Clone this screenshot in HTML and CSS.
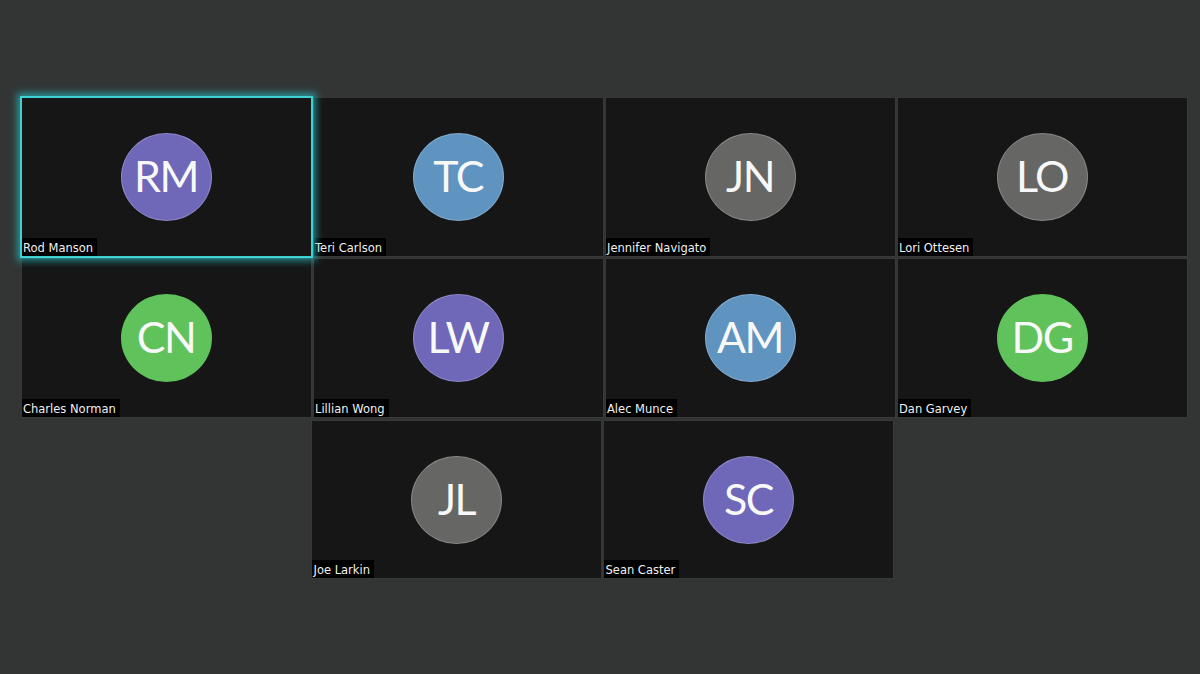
FILE: index.html
```html
<!DOCTYPE html>
<html lang="en">
<head>
<meta charset="utf-8">
<title>Gallery view</title>
<link rel="stylesheet" href="styles.css">
</head>
<body>
<main class="gallery">
  <div class="row">
    <div class="tile tile-active"><div class="avatar purple">RM</div><span class="name">Rod Manson</span></div>
    <div class="tile"><div class="avatar blue">TC</div><span class="name">Teri Carlson</span></div>
    <div class="tile"><div class="avatar gray">JN</div><span class="name">Jennifer Navigato</span></div>
    <div class="tile"><div class="avatar gray">LO</div><span class="name">Lori Ottesen</span></div>
  </div>
  <div class="row">
    <div class="tile"><div class="avatar green">CN</div><span class="name">Charles Norman</span></div>
    <div class="tile"><div class="avatar purple">LW</div><span class="name">Lillian Wong</span></div>
    <div class="tile"><div class="avatar blue">AM</div><span class="name">Alec Munce</span></div>
    <div class="tile"><div class="avatar green">DG</div><span class="name">Dan Garvey</span></div>
  </div>
  <div class="row row-last">
    <div class="tile"><div class="avatar gray">JL</div><span class="name">Joe Larkin</span></div>
    <div class="tile"><div class="avatar purple">SC</div><span class="name">Sean Caster</span></div>
  </div>
</main>
</body>
</html>
```
FILE: styles.css
```css
* { box-sizing: border-box; }
html, body { margin: 0; height: 674px; overflow: hidden; }
body { background: #333535; font-family: "DejaVu Sans", sans-serif; }
.gallery { display: flex; flex-direction: column; gap: 1px; padding: 97px 0 0 8px; }
.row { display: flex; justify-content: center; gap: 1px; }
.row-last { padding-right: 3px; margin-top: 1px; }
.tile {
  position: relative;
  width: 291px;
  height: 160px;
  display: flex;
  align-items: center;
  justify-content: center;
  background: #161616;
  border: 1px solid #373838;
}
.row-last .tile { height: 159px; }
.tile-active {
  z-index: 1;
  border-color: #3fd2d4;
  box-shadow: 0 0 0 1px #3fd2d4, 0 0 7px 4px rgba(40, 185, 190, 0.7);
}
.avatar {
  width: 91px;
  height: 88px;
  border-radius: 50%;
  display: flex;
  align-items: center;
  justify-content: center;
  padding-bottom: 3px;
  color: #f8f8f8;
  font: 400 43px/1 "Lato", sans-serif;
  letter-spacing: -1.5px;
  border: 1px solid rgba(255, 255, 255, 0.22);
}
.purple { background: #6f67b8; }
.blue { background: #5f93c0; }
.gray { background: #666664; }
.green { background: #5fc25b; border-color: transparent; }
.name {
  position: absolute;
  left: 0;
  bottom: 0;
  height: 18px;
  padding: 0 4px 0 1.5px;
  background: #000;
  color: #f0f0f0;
  font-size: 11.5px;
  line-height: 20px;
  white-space: nowrap;
}
```
